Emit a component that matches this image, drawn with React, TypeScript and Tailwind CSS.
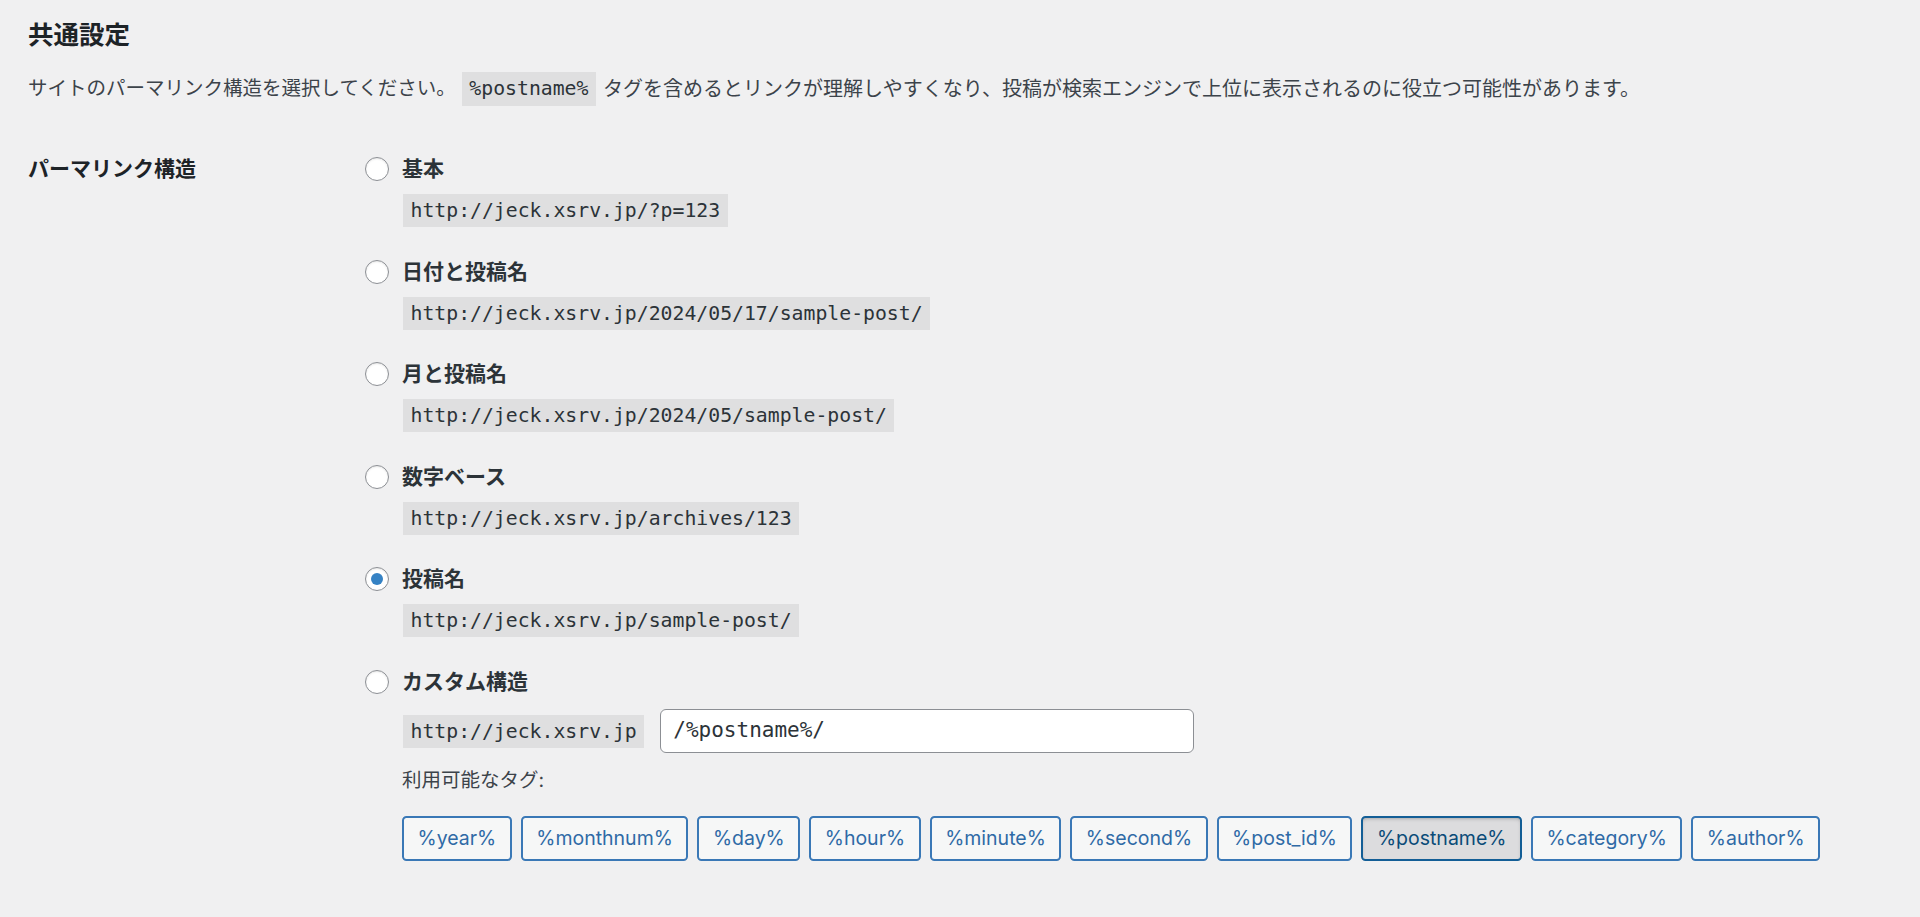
import React from "react";

const options = [
  { label: "基本", url: "http://jeck.xsrv.jp/?p=123" },
  { label: "日付と投稿名", url: "http://jeck.xsrv.jp/2024/05/17/sample-post/" },
  { label: "月と投稿名", url: "http://jeck.xsrv.jp/2024/05/sample-post/" },
  { label: "数字ベース", url: "http://jeck.xsrv.jp/archives/123" },
  { label: "投稿名", url: "http://jeck.xsrv.jp/sample-post/", checked: true },
];

const tags = [
  "%year%",
  "%monthnum%",
  "%day%",
  "%hour%",
  "%minute%",
  "%second%",
  "%post_id%",
  "%postname%",
  "%category%",
  "%author%",
];

const Radio = ({ checked }: { checked?: boolean }) => (
  <span className="flex h-[24px] w-[24px] shrink-0 items-center justify-center rounded-full border border-[#8c8f94] bg-white shadow-[inset_0_1px_2px_rgba(0,0,0,0.1)]">
    {checked && <span className="h-[12px] w-[12px] rounded-full bg-[#3582c4]" />}
  </span>
);

const Code = ({ children }: { children: React.ReactNode }) => (
  <code className="inline-block h-[33px] bg-[#dfdfe0] px-[7.5px] font-['DejaVu_Sans_Mono',monospace] text-[19.8px] leading-[33px] text-[#2c3338]">
    {children}
  </code>
);

export default function App() {
  return (
    <div className="min-h-screen w-full bg-[#f0f0f1] pl-[28px] font-['Inter','Noto_Sans_CJK_JP',sans-serif] text-[#3c434a]">
      <h2 className="pt-[18px] text-[25.5px] font-bold leading-[33px] text-[#1d2327]">共通設定</h2>

      <div className="mt-[21px] flex h-[34px] items-center text-[19.5px]">
        <span>サイトのパーマリンク構造を選択してください。</span>
        <code className="ml-[6px] inline-block h-[34px] bg-[#dfdfe0] px-[7.5px] font-['DejaVu_Sans_Mono',monospace] text-[19.8px] leading-[34px] text-[#2c3338]">
          %postname%
        </code>
        <span className="ml-[7px] text-[20px]">
          タグを含めるとリンクが理解しやすくなり、投稿が検索エンジンで上位に表示されるのに役立つ可能性があります。
        </span>
      </div>

      <div className="mt-[48px] flex">
        <div className="h-[30px] w-[337px] shrink-0 text-[21px] font-bold leading-[30px] text-[#1d2327]">
          パーマリンク構造
        </div>

        <div className="flex flex-col gap-[29.5px]">
          {options.map((o) => (
            <div key={o.label} className="flex flex-col">
              <div className="flex h-[30px] items-center gap-[13px]">
                <Radio checked={o.checked} />
                <span className="text-[21px] font-bold text-[#2c3338]">{o.label}</span>
              </div>
              <div className="ml-[38px] mt-[10px]">
                <Code>{o.url}</Code>
              </div>
            </div>
          ))}

          <div className="flex flex-col">
            <div className="flex h-[30px] items-center gap-[13px]">
              <Radio />
              <span className="text-[21px] font-bold text-[#2c3338]">カスタム構造</span>
            </div>
            <div className="ml-[38px] mt-[12.5px] flex items-center gap-[16px]">
              <Code>http://jeck.xsrv.jp</Code>
              <div className="flex h-[44px] w-[534px] items-center rounded-[6px] border border-[#8c8f94] bg-white px-[12px] font-['DejaVu_Sans_Mono',monospace] text-[21px] text-[#2c3338]">
                /%postname%/
              </div>
            </div>
            <div className="ml-[37px] mt-[12px] h-[30px] text-[19.5px] leading-[30px] text-[#3c434a]">
              利用可能なタグ:
            </div>
            <div className="ml-[37px] mt-[21px] flex gap-[9px]">
              {tags.map((t) =>
                t === "%postname%" ? (
                  <span
                    key={t}
                    className="flex h-[45px] items-center rounded-[4.5px] border-2 border-[#135e96] bg-[#dcdcde] px-[13.5px] text-[19.5px] text-[#0a4b78] shadow-[inset_0_2px_5px_-3px_rgba(0,0,0,0.5)]"
                  >
                    {t}
                  </span>
                ) : (
                  <span
                    key={t}
                    className="flex h-[45px] items-center rounded-[4.5px] border-2 border-[#3a78b6] bg-[#f6f7f7] px-[13.5px] text-[19.5px] text-[#2f6aa6]"
                  >
                    {t}
                  </span>
                )
              )}
            </div>
          </div>
        </div>
      </div>
    </div>
  );
}
